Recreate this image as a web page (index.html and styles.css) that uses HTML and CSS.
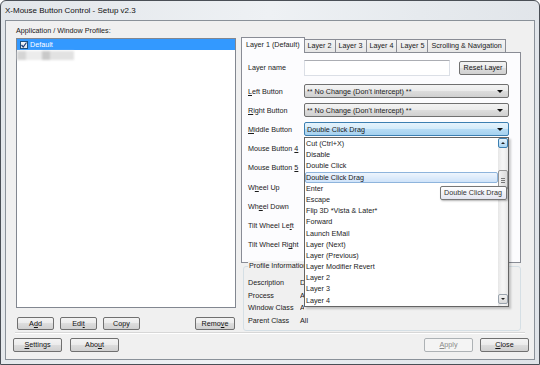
FILE: index.html
```html
<!DOCTYPE html>
<html lang="en">
<head>
    <meta charset="UTF-8">
    <title>X-Mouse Button Control - Setup v2.3</title>
    <link rel="stylesheet" href="styles.css">
</head>
<body>
<div class="window">
    <div class="titlebar">X-Mouse Button Control - Setup v2.3</div>
    <div class="client">
        <div class="main">
            <div class="profiles">
                <div class="caption">Application / Window Profiles:</div>
                <div class="listbox">
                    <div class="item selected">
                        <span class="check">
                            <svg width="6" height="6" viewBox="0 0 6 6"><polyline points="0.5,3 2.2,5 5.5,0.5" fill="none" stroke="#1f3f77" stroke-width="1.2"/></svg>
                        </span>Default
                    </div>
                    <div class="item blurred"><span class="b1"></span><span class="b2"></span><span class="b3"></span><span class="b4"></span></div>
                </div>
                <div class="btn-row">
                    <button class="btn small">A<u>d</u>d</button>
                    <button class="btn small">Edi<u>t</u></button>
                    <button class="btn small">Copy</button>
                    <button class="btn remove">Remo<u>v</u>e</button>
                </div>
            </div>

            <div class="settings">
                <div class="tabs">
                    <div class="tab active">Layer 1 (Default)</div>
                    <div class="tab">Layer 2</div>
                    <div class="tab">Layer 3</div>
                    <div class="tab">Layer 4</div>
                    <div class="tab">Layer 5</div>
                    <div class="tab">Scrolling &amp; Navigation</div>
                </div>
                <div class="panel">
                    <div class="row first">
                        <span class="label">Layer name</span>
                        <span class="textbox"></span>
                        <button class="btn reset">Reset Layer</button>
                    </div>
                    <div class="row">
                        <span class="label"><u>L</u>eft Button</span>
                        <div class="combo"><span class="value">** No Change (Don't intercept) **</span><span class="arrow"></span></div>
                    </div>
                    <div class="row">
                        <span class="label"><u>R</u>ight Button</span>
                        <div class="combo"><span class="value">** No Change (Don't intercept) **</span><span class="arrow"></span></div>
                    </div>
                    <div class="row">
                        <span class="label"><u>M</u>iddle Button</span>
                        <div class="combo focused"><span class="value">Double Click Drag</span><span class="arrow"></span></div>
                    </div>
                    <!-- the combos below sit under the open list -->
                    <div class="row">
                        <span class="label">Mouse Button <u>4</u></span>
                        <div class="combo"><span class="value"></span><span class="arrow"></span></div>
                    </div>
                    <div class="row">
                        <span class="label">Mouse Button <u>5</u></span>
                        <div class="combo"><span class="value"></span><span class="arrow"></span></div>
                    </div>
                    <div class="row">
                        <span class="label">W<u>h</u>eel Up</span>
                        <div class="combo"><span class="value"></span><span class="arrow"></span></div>
                    </div>
                    <div class="row">
                        <span class="label">Wh<u>e</u>el Down</span>
                        <div class="combo"><span class="value"></span><span class="arrow"></span></div>
                    </div>
                    <div class="row">
                        <span class="label">Tilt Wheel Le<u>f</u>t</span>
                        <div class="combo"><span class="value"></span><span class="arrow"></span></div>
                    </div>
                    <div class="row">
                        <span class="label">Tilt Wheel Ri<u>g</u>ht</span>
                        <div class="combo"><span class="value"></span><span class="arrow"></span></div>
                    </div>
                </div>

                <div class="info">
                    <div class="legend">Profile Information</div>
                    <div class="info-row"><span>Description</span><span class="clip">Default</span></div>
                    <div class="info-row"><span>Process</span><span class="clip">All</span></div>
                    <div class="info-row"><span>Window Class</span><span class="clip">All</span></div>
                    <div class="info-row"><span>Parent Class</span><span>All</span></div>
                </div>
            </div>
        </div>

        <div class="separator"></div>

        <div class="footer">
            <button class="btn wide"><u>S</u>ettings</button>
            <button class="btn wide">Abo<u>u</u>t</button>
            <button class="btn wide disabled apply"><u>A</u>pply</button>
            <button class="btn wide"><u>C</u>lose</button>
        </div>

        <!-- open drop-down of the Middle Button combo -->
        <div class="dropdown">
            <div class="options">
                <div class="option">Cut (Ctrl+X)</div>
                <div class="option">Disable</div>
                <div class="option">Double Click</div>
                <div class="option hover">Double Click Drag</div>
                <div class="option">Enter</div>
                <div class="option">Escape</div>
                <div class="option">Flip 3D *Vista &amp; Later*</div>
                <div class="option">Forward</div>
                <div class="option">Launch EMail</div>
                <div class="option">Layer (Next)</div>
                <div class="option">Layer (Previous)</div>
                <div class="option">Layer Modifier Revert</div>
                <div class="option">Layer 2</div>
                <div class="option">Layer 3</div>
                <div class="option">Layer 4</div>
            </div>
            <div class="scrollbar">
                <div class="sb-btn up"><span></span></div>
                <div class="thumb"><i></i><i></i><i></i></div>
                <div class="sb-btn down"><span></span></div>
            </div>
        </div>

        <div class="tooltip">Double Click Drag</div>
    </div>
</div>
</body>
</html>
```

FILE: styles.css
```css
body {
    margin: 0;
    background: #ffffff;
    font-family: "Liberation Sans", Arial, sans-serif;
    font-size: 7.2px;
    color: #1a1a1a;
}
.window {
    width: 540px;
    height: 365px;
    box-sizing: border-box;
    border: 1px solid #4a4f56;
    border-radius: 6px 6px 0 0;
    background: linear-gradient(100deg, #e2e6ea 0%, #eef1f4 45%, #e6eaee 70%, #dfe3e8 100%);
    display: flex;
    flex-direction: column;
}
.titlebar {
    height: 19px;
    line-height: 19px;
    padding-left: 4px;
    font-size: 8px;
    color: #111;
}
.client {
    position: relative;
    height: 340px;
    margin: 0 4px;
    box-sizing: border-box;
    border: 1px solid #8a9199;
    background: #f0f0f0;
    display: flex;
    flex-direction: column;
}
.main {
    display: flex;
    gap: 5px;
    padding: 5px 0 0 10px;
}

/* left column */
.profiles {
    width: 220px;
    display: flex;
    flex-direction: column;
}
.caption {
    height: 12px;
    line-height: 9px;
}
.listbox {
    height: 270px;
    box-sizing: border-box;
    border: 1px solid #828790;
    background: #fff;
}
.item {
    height: 11px;
    display: flex;
    align-items: center;
}
.item.selected {
    background: #3399ff;
    color: #fff;
    padding-left: 3px;
}
.check {
    width: 8px;
    height: 8px;
    box-sizing: border-box;
    margin-right: 2px;
    border: 1px solid #1c5180;
    background: linear-gradient(#f4f6f8, #dfe6ee);
    display: flex;
    align-items: center;
    justify-content: center;
}
.item.blurred {
    filter: blur(0.8px);
}
.item.blurred span {
    height: 9px;
}
.b1 { width: 9px; background: #d5d5d5; }
.b2 { width: 16px; background: #ececec; }
.b3 { width: 8px; background: #c9c9c9; }
.b4 { width: 24px; background: #e2e2e2; }

.btn-row {
    display: flex;
    gap: 6px;
    margin-top: 9px;
    padding-left: 1px;
}

/* buttons */
.btn {
    font: inherit;
    color: #111;
    height: 13px;
    padding: 0;
    box-sizing: border-box;
    border: 1px solid #707070;
    border-radius: 2px;
    background: linear-gradient(#f3f3f3 0%, #ebebeb 50%, #dddddd 50%, #d0d0d0 100%);
    line-height: 10px;
}
.btn.small { width: 37px; }
.btn.remove { width: 40px; margin-left: auto; margin-right: 1px; }
.btn.wide { width: 49px; height: 14px; }
.btn.reset { width: 48px; height: 14px; margin-left: 9px; }
.btn.disabled {
    color: #8a8a8a;
    border-color: #adb2b5;
    background: #f4f4f4;
}

/* right column */
.settings {
    width: 280px;
    display: flex;
    flex-direction: column;
}
.tabs {
    display: flex;
    align-items: flex-end;
    height: 15px;
    margin-top: 11px;
}
.tab {
    height: 13px;
    box-sizing: border-box;
    padding: 0 3px;
    line-height: 12px;
    border: 1px solid #898c95;
    border-bottom: none;
    margin-left: -1px;
    background: linear-gradient(#f3f3f3, #e6e6e6);
    white-space: nowrap;
}
.tab.active {
    height: 16px;
    margin-left: 0;
    margin-bottom: -1px;
    padding: 0 4px;
    line-height: 14px;
    background: #fcfcfe;
    position: relative;
    z-index: 1;
}
.panel {
    height: 211px;
    box-sizing: border-box;
    border: 1px solid #898c95;
    background: #fcfcfe;
    padding: 0 10px 0 6px;
}
.row {
    height: 19.2px;
    display: flex;
    align-items: center;
}
.row.first {
    height: 19.5px;
    margin: 5px 0 4px;
}
.label {
    width: 56px;
    white-space: nowrap;
}
.textbox {
    width: 146px;
    height: 16px;
    box-sizing: border-box;
    border: 1px solid #dbdfe6;
    border-top-color: #abadb3;
    background: #fff;
}
.combo {
    width: 205px;
    height: 14px;
    box-sizing: border-box;
    border: 1px solid #707070;
    border-radius: 2px;
    background: linear-gradient(#f3f3f3 0%, #ebebeb 50%, #dddddd 50%, #d0d0d0 100%);
    display: flex;
    align-items: center;
    padding-left: 2px;
}
.combo .value {
    flex: 1;
    white-space: nowrap;
}
.arrow {
    width: 0;
    height: 0;
    margin-right: 5px;
    border-left: 3px solid transparent;
    border-right: 3px solid transparent;
    border-top: 3px solid #111;
}
.combo.focused {
    border-color: #3c7fb1;
    background: linear-gradient(#e6f3fc 0%, #d3ebfa 50%, #b7dcf5 50%, #a5d1ef 100%);
}

.info {
    height: 65px;
    box-sizing: border-box;
    margin: 3px 0 0 2px;
    border: 1px solid #d5dfe5;
    border-radius: 3px;
}
.legend {
    width: fit-content;
    margin: -6px 0 0 4px;
    padding: 0 1px;
    line-height: 9px;
    background: #f0f0f0;
}
.info-row {
    display: grid;
    grid-template-columns: 52px auto;
    height: 12.7px;
    line-height: 12.7px;
    padding-left: 4px;
}
.legend + .info-row {
    margin-top: 7px;
}
/* values that run under the open list */
.clip {
    width: 4px;
    overflow: hidden;
    white-space: nowrap;
}

.separator {
    margin: 1px 9px 0;
    border-top: 1px solid #d7d7d7;
    border-bottom: 1px solid #ffffff;
}
.footer {
    display: flex;
    gap: 8px;
    margin-top: 4px;
    padding: 0 5px 0 7px;
}
.footer .apply {
    margin-left: auto;
    margin-right: -1px;
}

/* overlays: open combo list and its tooltip */
.dropdown {
    position: absolute;
    left: 298px;
    top: 116px;
    width: 205px;
    height: 170px;
    box-sizing: border-box;
    border: 1px solid #646464;
    background: #fff;
    display: flex;
    box-shadow: 2px 2px 2px rgba(0, 0, 0, 0.2);
}
.options {
    flex: 1;
}
.option {
    height: 11.2px;
    line-height: 11.2px;
    padding-left: 1px;
    white-space: nowrap;
}
.option.hover {
    box-sizing: border-box;
    border: 1px solid #8eb4dc;
    border-radius: 2px;
    padding-left: 0;
    line-height: 9.2px;
    background: linear-gradient(#eef5fd, #cfe3f9);
}
.scrollbar {
    width: 10px;
    background: linear-gradient(90deg, #e6e6e6, #f5f5f5 40%, #f5f5f5 60%, #e6e6e6);
    display: flex;
    flex-direction: column;
}
.sb-btn {
    height: 10px;
    box-sizing: border-box;
    border: 1px solid #9aa3ad;
    border-radius: 2px;
    background: linear-gradient(#f2f2f2, #d9d9d9);
    display: flex;
    align-items: center;
    justify-content: center;
}
.sb-btn.up {
    border-color: #3c7fb1;
    background: linear-gradient(#e6f3fc, #a9d4f2);
}
.sb-btn.down {
    margin-top: auto;
    margin-bottom: 2px;
}
.sb-btn span {
    width: 0;
    height: 0;
    border-left: 2px solid transparent;
    border-right: 2px solid transparent;
}
.sb-btn.up span { border-bottom: 2px solid #222; }
.sb-btn.down span { border-top: 2px solid #222; }
.thumb {
    height: 20px;
    margin-top: 22px;
    box-sizing: border-box;
    border: 1px solid #979797;
    border-radius: 2px;
    background: linear-gradient(90deg, #f1f1f1, #dcdcdc);
    display: flex;
    flex-direction: column;
    align-items: center;
    justify-content: center;
    gap: 1px;
}
.thumb i {
    width: 4px;
    height: 1px;
    background: #777;
}
.tooltip {
    position: absolute;
    left: 434px;
    top: 165px;
    height: 14px;
    box-sizing: border-box;
    padding: 0 4px 0 3px;
    line-height: 12px;
    border: 1px solid #767676;
    border-radius: 2px;
    background: linear-gradient(#ffffff, #e4e5f0);
    box-shadow: 1px 1px 2px rgba(0, 0, 0, 0.3);
    white-space: nowrap;
    color: #333;
}
```
